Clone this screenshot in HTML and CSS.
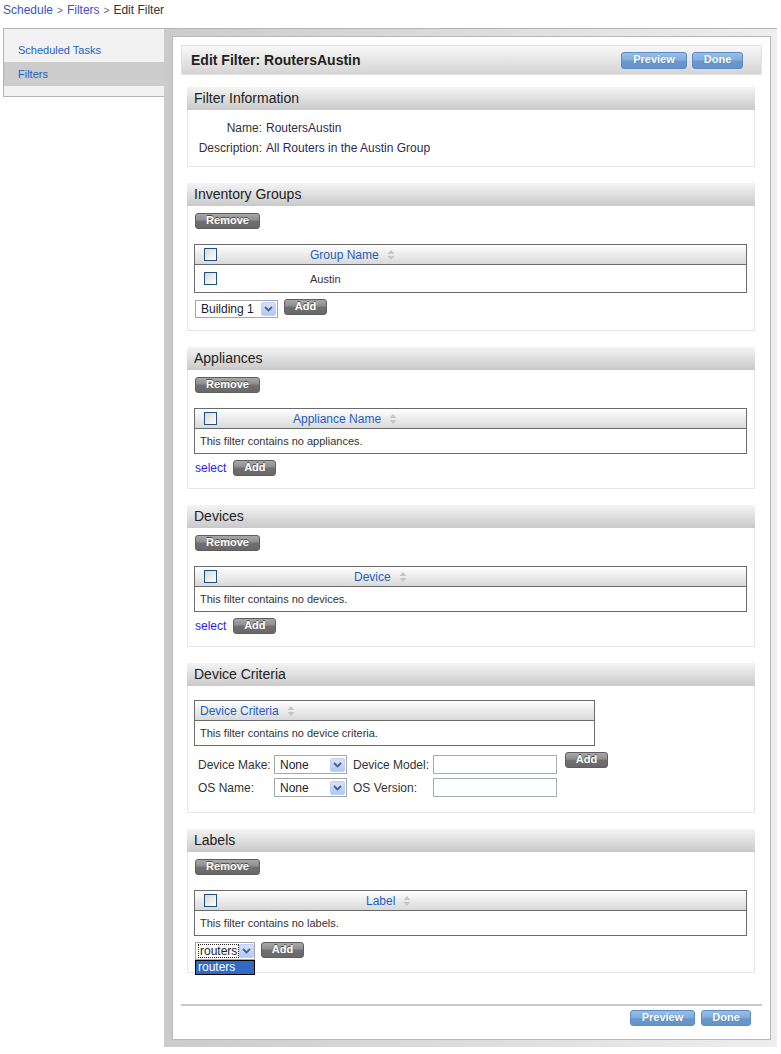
FILE: index.html
```html
<!DOCTYPE html>
<html lang="en">
<head>
<meta charset="utf-8">
<title>Edit Filter</title>
<link rel="stylesheet" href="styles.css">
</head>
<body>
<div class="crumbs"><a class="crumb-link">Schedule</a><span class="crumb-sep">&gt;</span><a class="crumb-link">Filters</a><span class="crumb-sep">&gt;</span><span class="crumb-cur">Edit Filter</span></div>
<div class="layout">
  <nav class="sidebar">
    <a class="nav-item">Scheduled Tasks</a>
    <a class="nav-item nav-item--active">Filters</a>
  </nav>
  <div class="main">
    <div class="panel">
      <div class="titlebar">
        <h1 class="title">Edit Filter: RoutersAustin</h1>
        <div class="btn-group">
          <button class="btn btn-blue btn-preview">Preview</button>
          <button class="btn btn-blue btn-done">Done</button>
        </div>
      </div>

      <div class="sections">
        <section class="section">
          <h2 class="sec-head">Filter Information</h2>
          <div class="sec-body sec-body--info">
            <dl class="info">
              <dt>Name:</dt><dd>RoutersAustin</dd>
              <dt>Description:</dt><dd>All Routers in the Austin Group</dd>
            </dl>
          </div>
        </section>

        <section class="section">
          <h2 class="sec-head">Inventory Groups</h2>
          <div class="sec-body">
            <button class="btn btn-gray btn-remove">Remove</button>
            <div class="grid">
              <div class="grid-head">
                <span class="cb"></span>
                <span class="col-name col-name--group">Group Name<svg class="sort" width="8" height="12" viewBox="0 0 8 12"><path d="M4 1 L7.5 5 H0.5 Z M4 11 L7.5 7 H0.5 Z" fill="#c6c6c6"/></svg></span>
              </div>
              <div class="grid-row">
                <span class="cb"></span>
                <span class="cell col-name--group">Austin</span>
              </div>
            </div>
            <div class="controls">
              <div class="xsel xsel--building"><span class="xsel-text">Building 1</span><span class="xsel-arrow"><svg width="9" height="6" viewBox="0 0 9 6"><path d="M1 1 L4.5 4.5 L8 1" stroke="#4a5f86" stroke-width="1.8" fill="none"/></svg></span></div>
              <button class="btn btn-gray btn-add">Add</button>
            </div>
          </div>
        </section>

        <section class="section">
          <h2 class="sec-head">Appliances</h2>
          <div class="sec-body">
            <button class="btn btn-gray btn-remove">Remove</button>
            <div class="grid">
              <div class="grid-head">
                <span class="cb"></span>
                <span class="col-name col-name--appliance">Appliance Name<svg class="sort" width="8" height="12" viewBox="0 0 8 12"><path d="M4 1 L7.5 5 H0.5 Z M4 11 L7.5 7 H0.5 Z" fill="#c6c6c6"/></svg></span>
              </div>
              <div class="grid-empty">This filter contains no appliances.</div>
            </div>
            <div class="controls controls--link">
              <a class="select-link">select</a>
              <button class="btn btn-gray btn-add">Add</button>
            </div>
          </div>
        </section>

        <section class="section">
          <h2 class="sec-head">Devices</h2>
          <div class="sec-body">
            <button class="btn btn-gray btn-remove">Remove</button>
            <div class="grid">
              <div class="grid-head">
                <span class="cb"></span>
                <span class="col-name col-name--device">Device<svg class="sort" width="8" height="12" viewBox="0 0 8 12"><path d="M4 1 L7.5 5 H0.5 Z M4 11 L7.5 7 H0.5 Z" fill="#c6c6c6"/></svg></span>
              </div>
              <div class="grid-empty">This filter contains no devices.</div>
            </div>
            <div class="controls controls--link">
              <a class="select-link">select</a>
              <button class="btn btn-gray btn-add">Add</button>
            </div>
          </div>
        </section>

        <section class="section">
          <h2 class="sec-head">Device Criteria</h2>
          <div class="sec-body sec-body--criteria">
            <div class="grid grid--criteria">
              <div class="grid-head">
                <span class="col-name col-name--criteria">Device Criteria<svg class="sort" width="8" height="12" viewBox="0 0 8 12"><path d="M4 1 L7.5 5 H0.5 Z M4 11 L7.5 7 H0.5 Z" fill="#c6c6c6"/></svg></span>
              </div>
              <div class="grid-empty">This filter contains no device criteria.</div>
            </div>
            <div class="crit-form">
              <label class="crit-label">Device Make:</label>
              <div class="xsel xsel--crit"><span class="xsel-text">None</span><span class="xsel-arrow"><svg width="9" height="6" viewBox="0 0 9 6"><path d="M1 1 L4.5 4.5 L8 1" stroke="#4a5f86" stroke-width="1.8" fill="none"/></svg></span></div>
              <label class="crit-label">Device Model:</label>
              <input class="txt" type="text">
              <button class="btn btn-gray btn-add btn-add--crit">Add</button>

              <label class="crit-label">OS Name:</label>
              <div class="xsel xsel--crit"><span class="xsel-text">None</span><span class="xsel-arrow"><svg width="9" height="6" viewBox="0 0 9 6"><path d="M1 1 L4.5 4.5 L8 1" stroke="#4a5f86" stroke-width="1.8" fill="none"/></svg></span></div>
              <label class="crit-label">OS Version:</label>
              <input class="txt" type="text">
            </div>
          </div>
        </section>

        <section class="section">
          <h2 class="sec-head">Labels</h2>
          <div class="sec-body">
            <button class="btn btn-gray btn-remove">Remove</button>
            <div class="grid">
              <div class="grid-head">
                <span class="cb"></span>
                <span class="col-name col-name--label">Label<svg class="sort" width="8" height="12" viewBox="0 0 8 12"><path d="M4 1 L7.5 5 H0.5 Z M4 11 L7.5 7 H0.5 Z" fill="#c6c6c6"/></svg></span>
              </div>
              <div class="grid-empty">This filter contains no labels.</div>
            </div>
            <div class="controls">
              <div class="xsel-wrap">
                <div class="xsel xsel--labels"><span class="xsel-text xsel-text--focus">routers</span><span class="xsel-arrow"><svg width="9" height="6" viewBox="0 0 9 6"><path d="M1 1 L4.5 4.5 L8 1" stroke="#4a5f86" stroke-width="1.8" fill="none"/></svg></span></div>
                <div class="dropdown">routers</div>
              </div>
              <button class="btn btn-gray btn-add btn-add--labels">Add</button>
            </div>
          </div>
        </section>
      </div>

      <div class="footer">
        <div class="footer-sep"></div>
        <div class="footer-btns">
          <button class="btn btn-blue btn-preview btn-preview--foot">Preview</button>
          <button class="btn btn-blue btn-done btn-done--foot">Done</button>
        </div>
      </div>
    </div>
  </div>
</div>
</body>
</html>
```

FILE: styles.css
```css
* { box-sizing: border-box; }

body {
  margin: 0;
  width: 781px;
  font-family: "Liberation Sans", Arial, sans-serif;
  font-size: 12px;
  color: #333;
  background: #fff;
}

/* breadcrumb */
.crumbs {
  height: 28px;
  padding: 3px 0 0 3px;
  font-size: 12px;
  line-height: 14px;
}
.crumb-link { color: #3a55c4; text-decoration: none; }
.crumb-sep { color: #666; font-size: 10px; margin: 0 4px; }
.crumb-cur { color: #333; }

/* layout */
.layout {
  display: flex;
  align-items: flex-start;
  margin-left: 3px;
}

.sidebar {
  width: 161px;
  flex: none;
  display: flex;
  flex-direction: column;
  background: #f2f2f2;
  border: 1px solid #b4b4b4;
  border-right: none;
  padding: 9px 0 10px;
}
.nav-item {
  display: block;
  height: 24px;
  line-height: 24px;
  padding-left: 14px;
  font-size: 11px;
  color: #2461c4;
  text-decoration: none;
}
.nav-item--active { background: #cccccc; }

.main {
  width: 613px;
  flex: none;
  border-top: 1px solid #b4b4b4;
  background: linear-gradient(to right, #cbcbcb, #eeeeee);
  padding: 7px 6px 7px 8px;
}

.panel {
  background: #fff;
  border: 1px solid #b8b8b8;
  padding: 8px 8px 13px 8px;
}

.titlebar {
  height: 30px;
  display: flex;
  align-items: center;
  justify-content: space-between;
  border: 1px solid #e2e2e2;
  background: linear-gradient(#f8f8f8, #d4d4d4);
  padding: 0 18px 0 9px;
}
.title {
  margin: 0;
  font-size: 14px;
  font-weight: bold;
  color: #222;
}
.btn-group { display: flex; gap: 5px; }

/* buttons */
.btn {
  display: inline-flex;
  align-items: center;
  justify-content: center;
  padding: 0 0 2px;
  border-radius: 3px;
  font-family: "Liberation Sans", Arial, sans-serif;
  font-weight: bold;
  font-size: 11px;
  line-height: 12px;
  color: #fff;
  cursor: pointer;
  flex: none;
}
.btn-blue {
  height: 17px;
  border: 1px solid #5b8cc3;
  background: linear-gradient(#98bfe6 0%, #82aedc 45%, #6898cd 55%, #6494ca 100%);
  text-shadow: 0 0 1px rgba(30, 60, 110, 0.45);
}
.btn-preview { width: 66px; }
.btn-done { width: 51px; }
.btn-preview--foot { width: 65px; height: 16px; }
.btn-done--foot { width: 50px; height: 16px; }

.btn-gray {
  border: 1px solid #5e5e5e;
  background: linear-gradient(#a8a8a8 0%, #8e8e8e 42%, #707070 52%, #686868 100%);
  text-shadow: 0 -1px 0 #474747;
}
.btn-remove {
  width: 65px;
  height: 16px;
  margin: 0 0 15px 1px;
}
.btn-add { width: 43px; height: 16px; }

/* sections */
.sections { margin: 12px 7px 0 6px; }
.section + .section { margin-top: 16px; }

.sec-head {
  margin: 0;
  height: 23px;
  line-height: 23px;
  padding-left: 7px;
  font-size: 14px;
  font-weight: normal;
  color: #222;
  background: linear-gradient(#f4f4f4, #c9c9c9);
}
.sec-body {
  border: 1px solid #e6e6e6;
  border-top: none;
  padding: 7px 7px 12px 6px;
}
.sec-body--info { padding: 8px 0 8px 0; }
.sec-body--criteria { padding-top: 14px; padding-bottom: 15px; }

.info {
  margin: 0;
  display: grid;
  grid-template-columns: 74px 1fr;
  column-gap: 4px;
  line-height: 20px;
  font-size: 12px;
}
.info dt { text-align: right; color: #333; }
.info dd { margin: 0; color: #2f2a4f; }

/* grids */
.grid { border: 1px solid #6b6b6b; }
.grid--criteria { width: 401px; }

.grid-head {
  height: 20px;
  display: flex;
  align-items: center;
  background: linear-gradient(#ffffff, #d9d9d9);
  border-bottom: 1px solid #6b6b6b;
}
.grid-row {
  height: 27px;
  display: flex;
  align-items: center;
  font-size: 11px;
  color: #333;
}
.grid-empty {
  height: 24px;
  display: flex;
  align-items: center;
  padding-left: 5px;
  font-size: 11px;
  color: #333;
}

.cb {
  width: 13px;
  height: 13px;
  flex: none;
  margin-left: 9px;
  border: 1px solid #1c5180;
  background: linear-gradient(135deg, #d8d8d0, #ffffff);
}

.col-name {
  display: flex;
  align-items: center;
  font-size: 12px;
  color: #1d5fc0;
}
.sort { margin-left: 8px; }
.col-name--group { margin-left: 93px; }
.col-name--appliance { margin-left: 76px; }
.col-name--device { margin-left: 137px; }
.col-name--label { margin-left: 149px; }
.col-name--criteria { margin-left: 5px; }

/* controls under grids */
.controls {
  display: flex;
  align-items: flex-start;
  gap: 6px;
  margin-top: 6px;
}
.controls--link { gap: 7px; align-items: center; }
.select-link {
  margin-left: 1px;
  font-size: 12px;
  line-height: 16px;
  color: #3517ee;
  text-decoration: none;
}

/* XP-like select */
.xsel {
  display: flex;
  align-items: center;
  justify-content: space-between;
  height: 18px;
  border: 1px solid #a5a7ab;
  background: #fff;
  padding: 0 1px 0 5px;
  font-size: 12px;
  color: #1c1c2c;
  flex: none;
}
.xsel--building { width: 83px; margin: 1px 0 0 1px; }
.xsel--crit { width: 73px; height: 19px; }
.xsel--labels { width: 60px; padding-left: 2px; }
.xsel-arrow {
  width: 15px;
  height: 14px;
  flex: none;
  display: flex;
  align-items: center;
  justify-content: center;
  border: 1px solid #bccff9;
  border-radius: 2px;
  background: linear-gradient(#d6e2fd, #b3c7f6);
}
.xsel-text--focus {
  border: 1px dotted #222;
  line-height: 12px;
  padding: 0 1px;
}

.xsel-wrap {
  position: relative;
  margin-left: 1px;
}
.dropdown {
  position: absolute;
  left: 0;
  top: 100%;
  width: 60px;
  height: 15px;
  border: 1px solid #000;
  background: #316ac5;
  color: #fff;
  font-size: 12px;
  line-height: 13px;
  padding-left: 2px;
}

/* device criteria form */
.crit-form {
  margin-top: 9px;
  padding-left: 4px;
  display: grid;
  grid-template-columns: 76px 79px 80px 124px 52px;
  grid-auto-rows: 19px;
  row-gap: 4px;
  align-items: center;
}
.crit-label { font-size: 12px; color: #333; white-space: nowrap; }
.txt {
  width: 124px;
  height: 19px;
  border: 1px solid #a5acb2;
  background: #fff;
  margin: 0;
  padding: 0 3px;
}
.btn-add--crit {
  align-self: start;
  margin: -3px 0 0 8px;
}

/* footer */
.footer { margin-top: 31px; }
.footer-sep {
  height: 2px;
  background: #c9c9c9;
}
.footer-btns {
  display: flex;
  justify-content: flex-end;
  gap: 6px;
  padding-right: 11px;
  margin-top: 4px;
}
```
